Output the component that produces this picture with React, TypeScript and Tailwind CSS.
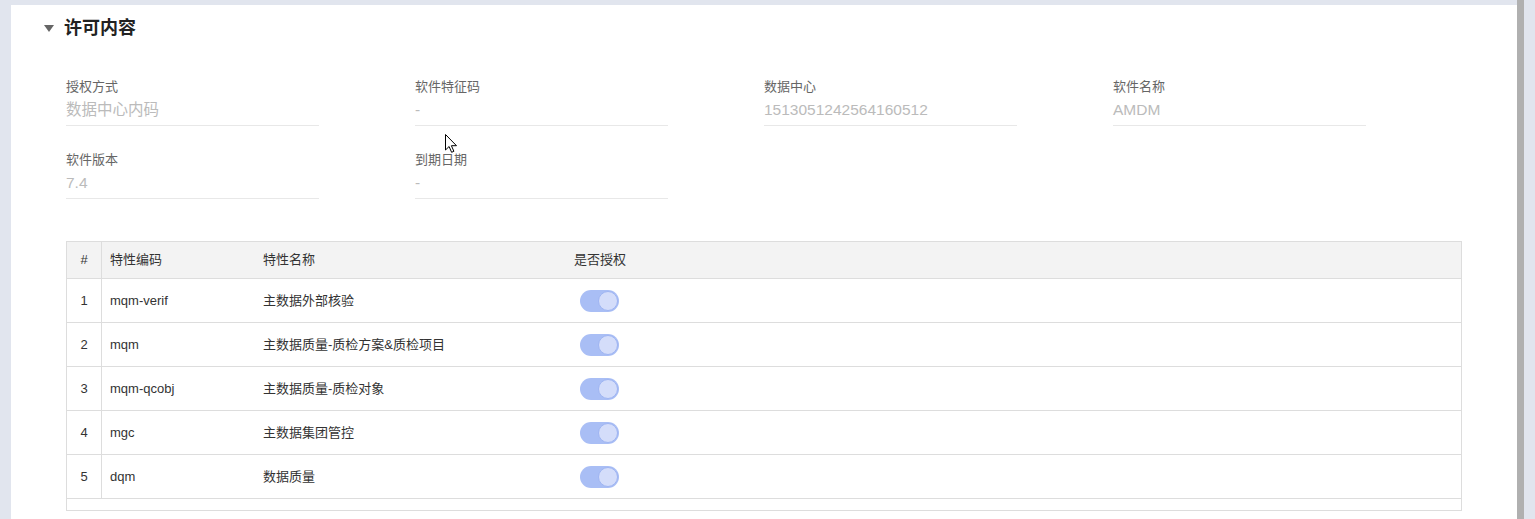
import React from "react";

const FONT = '"Liberation Sans", Arial, "Noto Sans CJK SC", sans-serif';

type Field = { label: string; value: string };

const FIELDS: Field[][] = [
  [
    { label: "授权方式", value: "数据中心内码" },
    { label: "软件特征码", value: "-" },
    { label: "数据中心", value: "1513051242564160512" },
    { label: "软件名称", value: "AMDM" },
  ],
  [
    { label: "软件版本", value: "7.4" },
    { label: "到期日期", value: "-" },
  ],
];

const FEATURES = [
  { code: "mqm-verif", name: "主数据外部核验" },
  { code: "mqm", name: "主数据质量-质检方案&质检项目" },
  { code: "mqm-qcobj", name: "主数据质量-质检对象" },
  { code: "mgc", name: "主数据集团管控" },
  { code: "dqm", name: "数据质量" },
];

function ReadonlyField({ label, value }: Field) {
  return (
    <div className="w-[253px] border-b border-[#e8e8e8] pb-[4px]">
      <div className="text-[13px] leading-[20px] text-[#666]">{label}</div>
      <div className="mt-[2px] text-[15.5px] leading-[22px] text-[#bbb]">{value}</div>
    </div>
  );
}

// Switch shown in the "是否授权" column, always on and disabled
function Toggle() {
  return (
    <span className="inline-flex h-[22px] w-[39px] items-center justify-end rounded-full bg-[#a9bef5] p-[1px]">
      <span className="h-[20px] w-[20px] rounded-full border border-[#9fb5f2] bg-[#d4ddfa]" />
    </span>
  );
}

export default function App() {
  return (
    <div
      className="relative flex h-[519px] w-[1535px] overflow-hidden bg-[#e1e5ee]"
      style={{ fontFamily: FONT }}
    >
      <div className="ml-[11px] mt-[5px] w-[1506px] bg-white">
        {/* section title */}
        <div className="flex h-[46px] items-center pl-[33px] pt-[1px]">
          <svg width="10" height="7" viewBox="0 0 10 7" className="mr-[10px]">
            <path d="M0 0h10L5 7z" fill="#666" />
          </svg>
          <span className="text-[18px] font-bold text-[#222]">许可内容</span>
        </div>

        {/* license fields */}
        <div className="flex flex-col gap-[24px] pl-[55px] pt-[26px]">
          {FIELDS.map((row, i) => (
            <div key={i} className="grid grid-cols-[349px_349px_349px_349px]">
              {row.map((f) => (
                <ReadonlyField key={f.label} {...f} />
              ))}
            </div>
          ))}
        </div>

        {/* feature table */}
        <div className="ml-[55px] mt-[42px] w-[1396px] border border-[#ddd] text-[13px] text-[#333]">
          <div className="flex h-[37px] items-center border-b border-[#ddd] bg-[#f3f3f3]">
            <div className="flex h-full w-[35px] items-center justify-center border-r border-[#ddd]">#</div>
            <div className="w-[152px] pl-[8px]">特性编码</div>
            <div className="w-[310px] pl-[9px]">特性名称</div>
            <div className="w-[72px] text-center">是否授权</div>
          </div>
          {FEATURES.map((f, i) => (
            <div key={f.code} className="flex h-[44px] items-center border-b border-[#ddd]">
              <div className="flex h-full w-[35px] items-center justify-center border-r border-[#ddd]">
                {i + 1}
              </div>
              <div className="w-[152px] pl-[8px]">{f.code}</div>
              <div className="w-[310px] pl-[9px]">{f.name}</div>
              <div className="flex w-[71px] justify-center">
                <Toggle />
              </div>
            </div>
          ))}
          <div className="h-[11px]" />
        </div>
      </div>

      {/* vertical scrollbar thumb */}
      <div className="h-full w-[7px] bg-[#b0b0b0]" />

      {/* mouse pointer */}
      <svg
        width="13"
        height="20"
        viewBox="0 0 13 20"
        className="absolute left-[445px] top-[134px]"
      >
        <path
          d="M0.5 0.5v15.5l3.6-3.5 2.5 5.8 2.3-1-2.5-5.6h5.1z"
          fill="#fff"
          stroke="#000"
          strokeWidth="1"
          strokeLinejoin="round"
        />
      </svg>
    </div>
  );
}
